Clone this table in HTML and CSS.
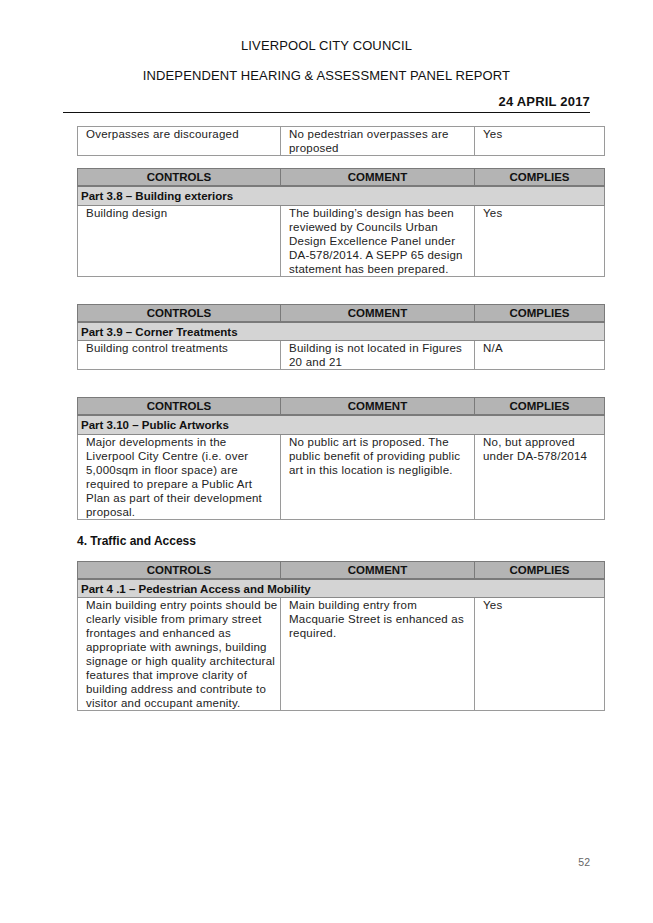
FILE: index.html
```html
<!DOCTYPE html>
<html>
<head>
<meta charset="utf-8">
<link rel="stylesheet" href="styles.css">
</head>
<body>
<div class="page">
  <header class="doc-head">
    <div class="title t1">LIVERPOOL CITY COUNCIL</div>
    <div class="title t2">INDEPENDENT HEARING &amp; ASSESSMENT PANEL REPORT</div>
    <div class="date">24 APRIL 2017</div>
  </header>

  <table class="grid first">
    <colgroup><col class="c1"><col class="c2"><col class="c3"></colgroup>
    <tr class="body">
      <td>Overpasses are discouraged</td>
      <td>No pedestrian overpasses are proposed</td>
      <td>Yes</td>
    </tr>
  </table>

  <table class="grid second">
    <colgroup><col class="c1"><col class="c2"><col class="c3"></colgroup>
    <tr class="hd"><th>CONTROLS</th><th>COMMENT</th><th>COMPLIES</th></tr>
    <tr class="part"><td colspan="3">Part 3.8 – Building exteriors</td></tr>
    <tr class="body">
      <td>Building design</td>
      <td>The building’s design has been reviewed by Councils Urban Design Excellence Panel under DA-578/2014. A SEPP 65 design statement has been prepared.</td>
      <td>Yes</td>
    </tr>
  </table>

  <table class="grid">
    <colgroup><col class="c1"><col class="c2"><col class="c3"></colgroup>
    <tr class="hd"><th>CONTROLS</th><th>COMMENT</th><th>COMPLIES</th></tr>
    <tr class="part"><td colspan="3">Part 3.9 – Corner Treatments</td></tr>
    <tr class="body">
      <td>Building control treatments</td>
      <td>Building is not located in Figures 20 and 21</td>
      <td>N/A</td>
    </tr>
  </table>

  <table class="grid">
    <colgroup><col class="c1"><col class="c2"><col class="c3"></colgroup>
    <tr class="hd"><th>CONTROLS</th><th>COMMENT</th><th>COMPLIES</th></tr>
    <tr class="part"><td colspan="3">Part 3.10 – Public Artworks</td></tr>
    <tr class="body">
      <td>Major developments in the<br>Liverpool City Centre (i.e. over 5,000sqm in floor space) are required to prepare a Public Art<br>Plan as part of their development proposal.</td>
      <td>No public art is proposed. The public benefit of providing public art in this location is negligible.</td>
      <td>No, but approved under DA-578/2014</td>
    </tr>
  </table>

  <h2 class="section">4. Traffic and Access</h2>

  <table class="grid last">
    <colgroup><col class="c1"><col class="c2"><col class="c3"></colgroup>
    <tr class="hd"><th>CONTROLS</th><th>COMMENT</th><th>COMPLIES</th></tr>
    <tr class="part"><td colspan="3">Part 4 .1 – Pedestrian Access and Mobility</td></tr>
    <tr class="body">
      <td>Main building entry points should be clearly visible from primary street frontages and enhanced as appropriate with awnings, building signage or high quality architectural features that improve clarity of building address and contribute to visitor and occupant amenity.</td>
      <td>Main building entry from Macquarie Street is enhanced as required.</td>
      <td>Yes</td>
    </tr>
  </table>

  <div class="pageno">52</div>
</div>
</body>
</html>
```

FILE: styles.css
```css
* { box-sizing: border-box; }
html, body { margin: 0; padding: 0; background: #fff; }
body {
  font-family: "Liberation Sans", Arial, sans-serif;
  color: #1c1c1c;
  width: 653px;
  height: 923px;
  overflow: hidden;
}
.page {
  padding: 0 50px 0 63px;
}
.doc-head {
  padding-top: 38px;
  border-bottom: 1px solid #111;
  padding-bottom: 2px;
  width: 527px;
}
.title {
  text-align: center;
  font-size: 13px;
  line-height: 16px;
  color: #111;
  letter-spacing: 0.12px;
}
.t2 { margin-top: 14px; }
.date {
  margin-top: 10px;
  text-align: right;
  font-weight: bold;
  font-size: 13px;
  letter-spacing: 0.2px;
  line-height: 16px;
  color: #111;
}
.grid {
  margin-left: 14px;
  width: 527px;
  border-collapse: collapse;
  table-layout: fixed;
  font-size: 11.5px;
  letter-spacing: 0.22px;
  margin-top: 27px;
}
.grid.first { margin-top: 13px; }
.grid.second { margin-top: 12px; }
.c1 { width: 203px; }
.c2 { width: 194px; }
.c3 { width: 130px; }
.grid th, .grid td {
  vertical-align: top;
  text-align: left;
}
.hd th {
  background: #b4b4b4;
  border: 1px solid #7a7a7a;
  border-bottom-width: 2px;
  text-align: center;
  font-weight: bold;
  font-size: 11.5px;
  letter-spacing: 0;
  height: 17px;
  line-height: 15px;
  padding: 1px 4px 0;
  color: #111;
}
.part td {
  background: #d4d4d4;
  border: 1px solid #8a8a8a;
  font-weight: bold;
  font-size: 11.5px;
  letter-spacing: 0;
  height: 19px;
  line-height: 16px;
  padding: 1px 3px 0;
  color: #111;
}
.body td {
  border: 1px solid #9a9a9a;
  padding: 0 4px 0 8px;
  line-height: 14px;
  color: #222;
}
.body td:first-child { padding-right: 0; }
.section {
  margin: 13px 0 0 14px;
  font-size: 12px;
  font-weight: bold;
  line-height: 16px;
  color: #111;
}
.grid.last { margin-top: 12px; }
.pageno {
  margin-top: 144px;
  width: 527px;
  text-align: right;
  font-size: 10.5px;
  color: #666;
  line-height: 14px;
}
```
